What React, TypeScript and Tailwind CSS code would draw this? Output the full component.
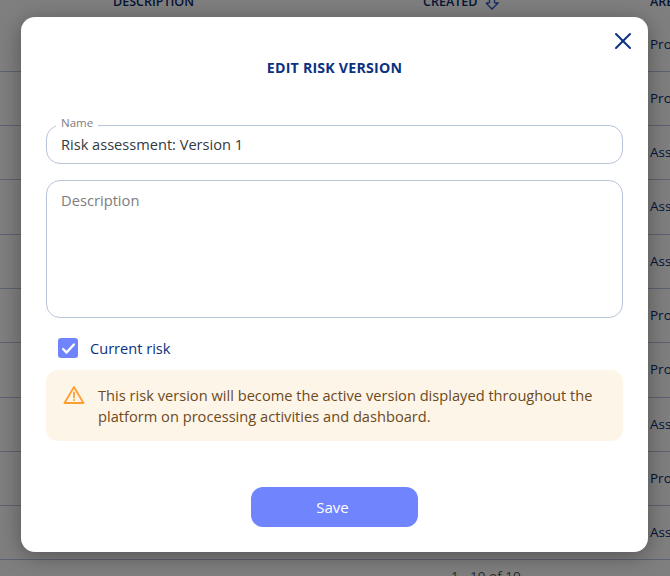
const rows = ['Pro', 'Pro', 'Ass', 'Ass', 'Ass', 'Pro', 'Pro', 'Ass', 'Pro', 'Ass'];

function WarningIcon() {
  return (
    <svg width="22" height="20" viewBox="0 0 22 20" fill="none" stroke="#ff9f2f" strokeWidth="1.8" strokeLinejoin="round" strokeLinecap="round">
      <path d="M11 2 L20.5 18 H1.5 Z" />
      <path d="M11 7.5 V12.5" />
      <path d="M11 15 V15.2" />
    </svg>
  );
}

export default function App() {
  return (
    <div className="relative w-[670px] h-[576px] overflow-hidden bg-white font-['Open_Sans',sans-serif]">
      <div className="h-[17.5px] flex items-end pb-[7px] text-[12.5px] leading-[18px] font-semibold text-[#0a2a6b]">
        <span className="ml-[113px] w-[310px] shrink-0">DESCRIPTION</span>
        <span className="w-[62px] shrink-0">CREATED</span>
        <svg width="14" height="14" viewBox="0 0 14 14" fill="none" stroke="#2f55c0" strokeWidth="1.3" className="shrink-0 mb-[1px]">
          <path d="M1 7 H4.5 M9.5 7 H13 L7 13 L1 7" />
          <path d="M4.5 0 V7 M9.5 0 V7" />
        </svg>
        <span className="ml-[151px] w-[40px] shrink-0">ARE</span>
      </div>
      <div>
        {rows.map((row, index) => (
          <div key={index} className="h-[54.3px] border-b border-[#b9c3e6] pl-[650px] text-[13.5px] leading-[53px] text-[#0a2a6b] whitespace-nowrap">
            {row}
          </div>
        ))}
      </div>
      <div className="pl-[451px] text-[13.5px] leading-[18px] pt-[7px] text-[#555]">1 - 10 of 10</div>

      <div className="absolute inset-0 bg-black/50 pt-[17px] pl-[21px]">
        <div className="relative w-[627px] h-[535px] bg-white rounded-[14px] shadow-[0_4px_22px_rgba(0,0,0,0.35)] px-[25px] pt-[40px]">
          <button className="absolute top-[15px] right-[16px] w-[18px] h-[18px]">
            <svg width="18" height="18" viewBox="0 0 18 18" fill="none" stroke="#0c3180" strokeWidth="2" strokeLinecap="round" className="block">
              <path d="M2 2 L16 16" />
              <path d="M16 2 L2 16" />
            </svg>
          </button>
          <h2 className="text-center text-[14.2px] leading-[22px] font-bold text-[#0c3180] tracking-[0.2px]">EDIT RISK VERSION</h2>

          <div className="relative mt-[46px] h-[39px] border border-[#b7c5d8] rounded-[14px] pl-[14px] flex items-center text-[14.6px] text-[#333a42]">
            <span className="absolute -top-[11px] left-[9px] bg-white px-[5px] text-[11.5px] leading-[15px] text-[#7d7d7d]">Name</span>
            Risk assessment: Version 1
          </div>
          <div className="mt-[16px] h-[138px] border border-[#b7c5d8] rounded-[14px] pl-[14px] pt-[9px] text-[14.7px] leading-[20px] text-[#7d7d7d]">
            Description
          </div>

          <div className="mt-[20px] ml-[12px] flex items-center gap-[12px]">
            <div className="w-[20px] h-[20px] rounded-[3px] bg-[#6f84fd] flex items-center justify-center">
              <svg width="15" height="13" viewBox="0 0 14 12" fill="none" stroke="white" strokeWidth="2.2" strokeLinecap="round" strokeLinejoin="round">
                <path d="M2 6.5 L5.2 9.8 L12 2.2" />
              </svg>
            </div>
            <span className="text-[14.6px] leading-[20px] text-[#0c3180]">Current risk</span>
          </div>

          <div className="mt-[12px] h-[71px] rounded-[12px] bg-[#fef5e9] pl-[17px] flex items-center gap-[13px] text-[14.65px] leading-[21px] text-[#6b4a20]">
            <div className="shrink-0 -mt-[21px]">
              <WarningIcon />
            </div>
            <p className="w-[510px]">This risk version will become the active version displayed throughout the platform on processing activities and dashboard.</p>
          </div>

          <div className="mt-[46px] flex justify-center">
            <button className="w-[167px] h-[40px] pr-[4px] rounded-[12px] bg-[#6f84fd] text-white text-[15px]">Save</button>
          </div>
        </div>
      </div>
    </div>
  );
}
